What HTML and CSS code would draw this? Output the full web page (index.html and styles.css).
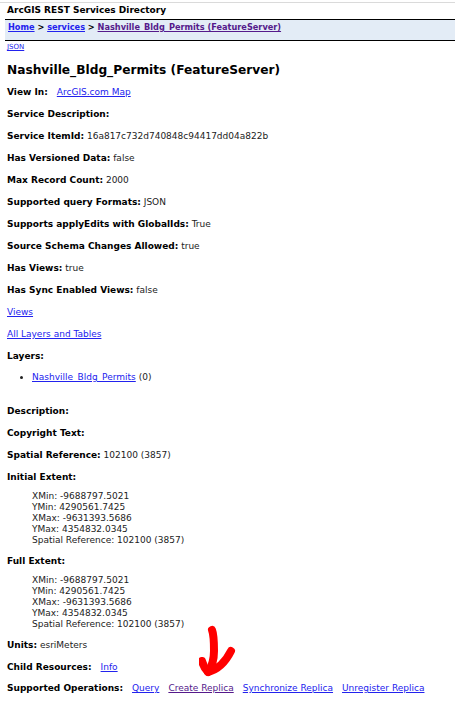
FILE: index.html
```html
<!DOCTYPE html>
<html>
<head>
<meta charset="utf-8">
<title>Nashville_Bldg_Permits (FeatureServer)</title>
<link rel="stylesheet" href="styles.css">
</head>
<body>
<div class="topline"></div>
<div class="appname">ArcGIS REST Services Directory</div>
<div class="crumbs">
  <a href="#" class="bc">Home</a> &gt; <a href="#" class="bc">services</a> &gt; <a href="#" class="bc visited">Nashville_Bldg_Permits (FeatureServer)</a>
</div>
<div class="content">
  <div class="json"><a href="#">JSON</a></div>
  <h2 class="title">Nashville_Bldg_Permits (FeatureServer)</h2>
  <div class="rows">
    <div class="row"><b>View In:</b><a href="#" class="lk">ArcGIS.com Map</a></div>
    <div class="row"><b>Service Description:</b></div>
    <div class="row"><b>Service ItemId:</b> 16a817c732d740848c94417dd04a822b</div>
    <div class="row"><b>Has Versioned Data:</b> false</div>
    <div class="row"><b>Max Record Count:</b> 2000</div>
    <div class="row"><b>Supported query Formats:</b> JSON</div>
    <div class="row"><b>Supports applyEdits with GlobalIds:</b> True</div>
    <div class="row"><b>Source Schema Changes Allowed:</b> true</div>
    <div class="row"><b>Has Views:</b> true</div>
    <div class="row"><b>Has Sync Enabled Views:</b> false</div>
    <div class="row"><a href="#">Views</a></div>
    <div class="row"><a href="#">All Layers and Tables</a></div>
    <div class="row"><b>Layers:</b></div>
    <ul class="layers"><li><a href="#">Nashville_Bldg_Permits</a> (0)</li></ul>
    <div class="row"><b>Description:</b></div>
    <div class="row"><b>Copyright Text:</b></div>
    <div class="row"><b>Spatial Reference:</b> 102100 (3857)</div>
    <div class="row"><b>Initial Extent:</b></div>
    <div class="extent">
      <div>XMin: -9688797.5021</div>
      <div>YMin: 4290561.7425</div>
      <div>XMax: -9631393.5686</div>
      <div>YMax: 4354832.0345</div>
      <div>Spatial Reference: 102100 (3857)</div>
    </div>
    <div class="row"><b>Full Extent:</b></div>
    <div class="extent">
      <div>XMin: -9688797.5021</div>
      <div>YMin: 4290561.7425</div>
      <div>XMax: -9631393.5686</div>
      <div>YMax: 4354832.0345</div>
      <div>Spatial Reference: 102100 (3857)</div>
    </div>
    <div class="row"><b>Units:</b> esriMeters</div>
    <div class="row"><b>Child Resources:</b><a href="#" class="lk">Info</a></div>
    <div class="row ops"><b>Supported Operations:</b><a href="#" class="lk">Query</a><a href="#" class="lk visited">Create Replica</a><a href="#" class="lk">Synchronize Replica</a><a href="#" class="lk">Unregister Replica</a>
      <svg class="arrow" width="40" height="56" viewBox="0 0 40 56" aria-hidden="true">
        <path d="M13 7 C15 12 15 20 15 28 C15 36 14 42 9 49" fill="none" stroke="#ff0000" stroke-width="8" stroke-linecap="round" stroke-linejoin="round"/>
        <path d="M3 38 C4 42 6 46 9 49 C17 47 26 40 32 28" fill="none" stroke="#ff0000" stroke-width="8" stroke-linecap="round" stroke-linejoin="round"/>
      </svg>
    </div>
  </div>
</div>
</body>
</html>
```

FILE: styles.css
```css
html, body {
  margin: 0;
  padding: 0;
  background: #ffffff;
}

body {
  font-family: "DejaVu Sans", Verdana, sans-serif;
  font-size: 9px;
  color: #000;
}

a {
  color: #2222ee;
  text-decoration: underline;
}

a.visited {
  color: #551a8b;
}

.topline {
  height: 2px;
  border-bottom: 1px solid #dadada;
}

.appname {
  font-weight: bold;
  line-height: 12px;
  padding: 1px 7px 3px 7px;
}

.crumbs {
  margin-left: 5px;
  border-top: 1px solid #000;
  border-bottom: 1px solid #000;
  background: #e3ecf6;
  font-weight: bold;
  font-size: 8.2px;
  line-height: 12px;
  padding: 1px 3px 7px 3px;
}

.content {
  padding: 0 7px;
}

.json {
  font-size: 7px;
  line-height: 9px;
  margin-top: 2px;
}

.title {
  font-size: 12.2px;
  font-weight: bold;
  line-height: 16px;
  margin: 10px 0 8px 0;
}

.rows {
  display: flex;
  flex-direction: column;
  gap: 10px;
}

.row {
  line-height: 12px;
  color: #222;
  position: relative;
  white-space: nowrap;
}

.row b {
  color: #000;
}

.lk {
  margin-left: 9px;
}

.layers {
  margin: -1px 0 12px 0;
  padding-left: 25px;
  line-height: 12px;
  color: #222;
}

.extent {
  padding-left: 25px;
  line-height: 11px;
  color: #222;
  margin: -2px 0 -1px 0;
}

.ops {
  margin-top: -1px;
}

.arrow {
  position: absolute;
  left: 192px;
  top: -59px;
}
```
